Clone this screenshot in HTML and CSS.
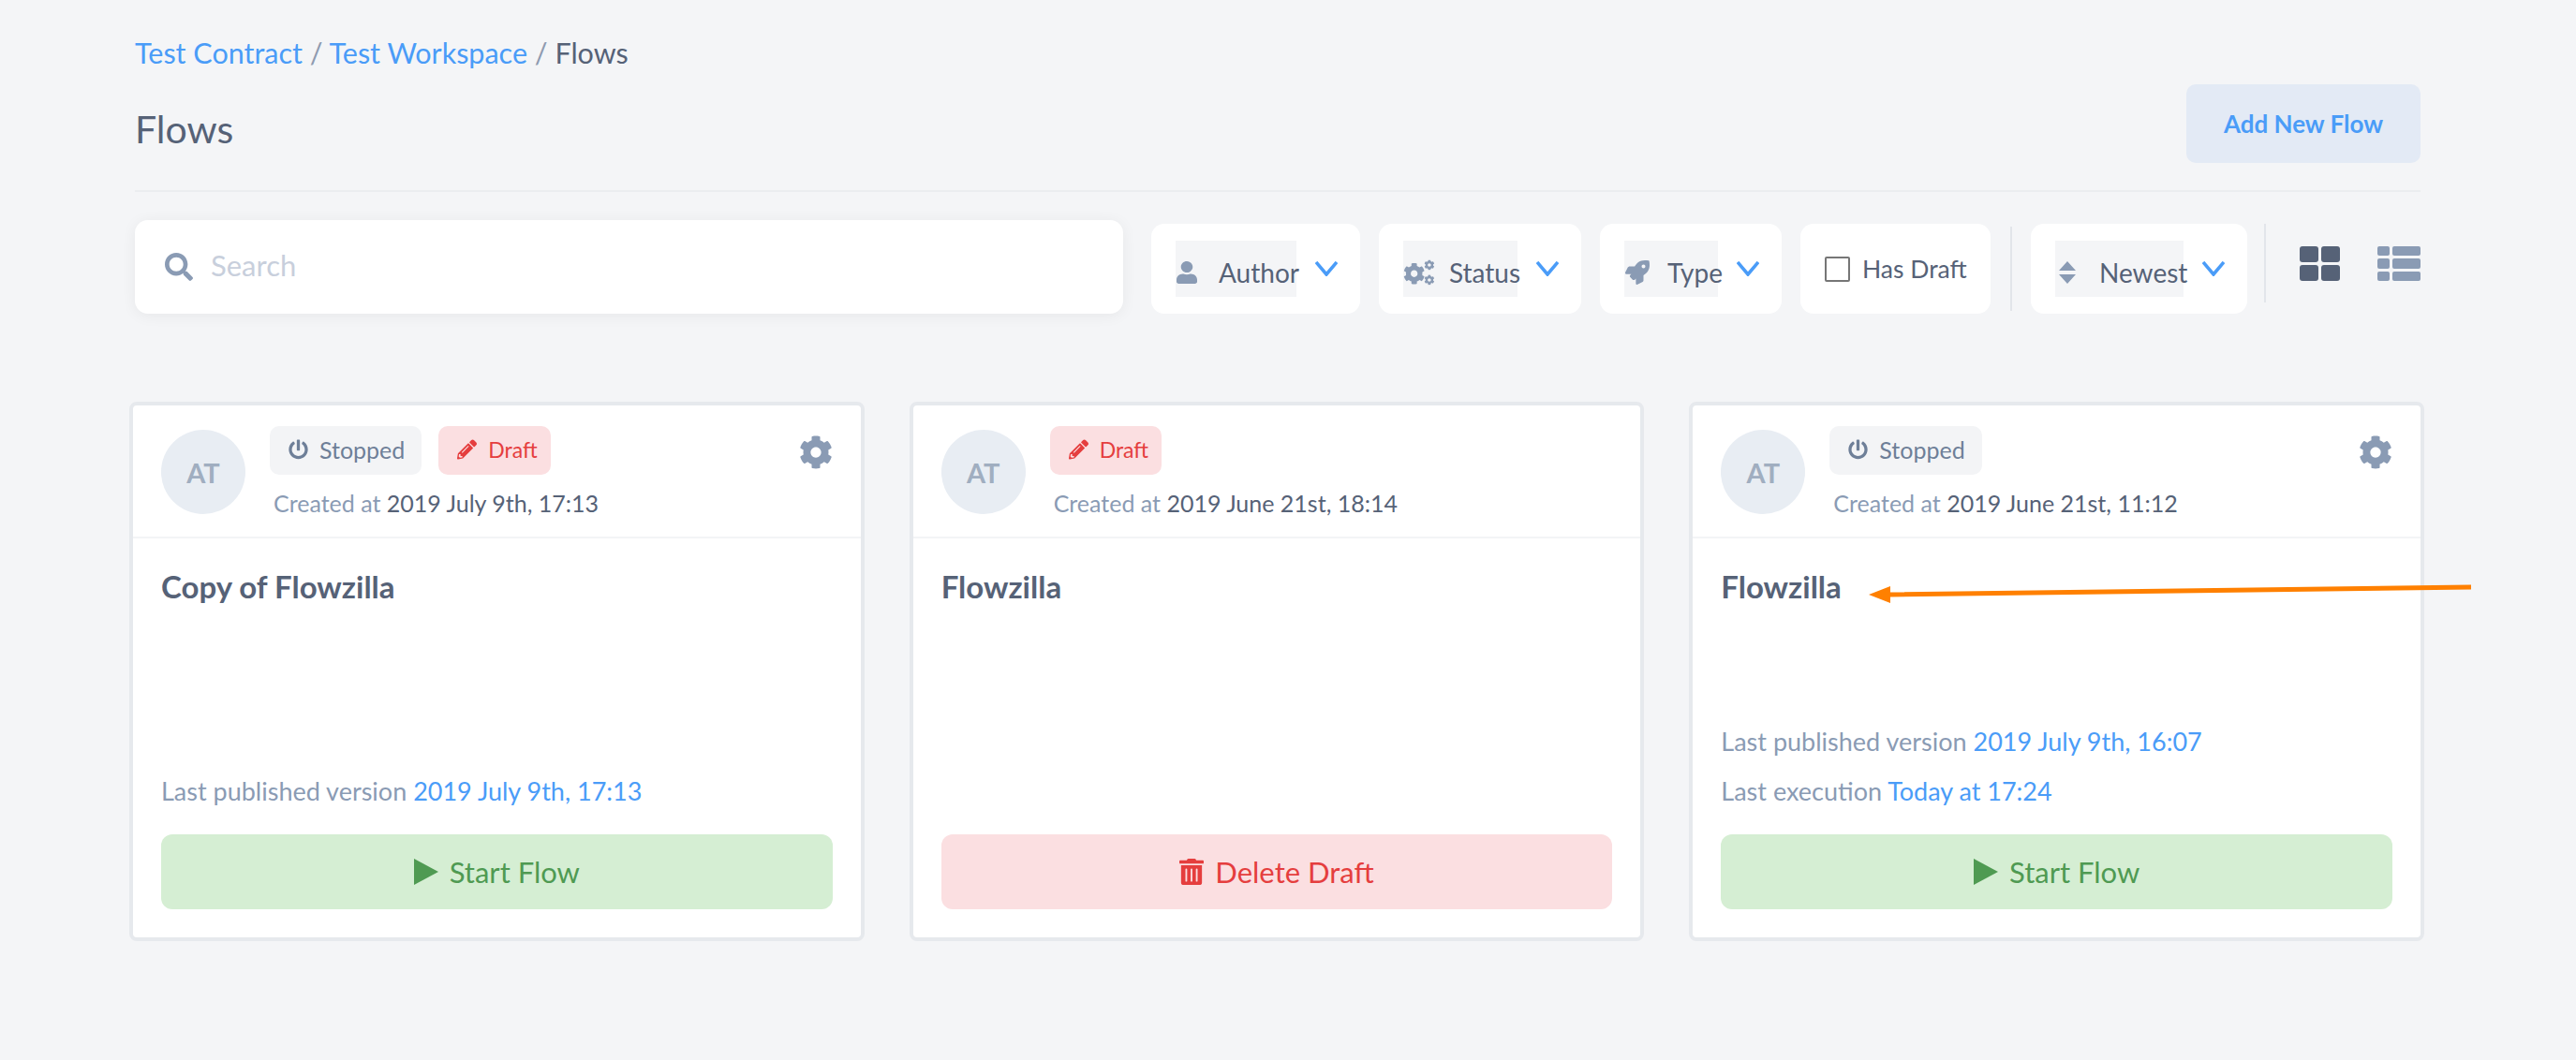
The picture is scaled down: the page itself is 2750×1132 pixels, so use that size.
FILE: index.html
```html
<!DOCTYPE html>
<html lang="en">
<head>
    <meta charset="UTF-8">
    <title>Flows</title>
    <link rel="stylesheet" href="styles.css">
</head>
<body>
<svg class="icon-defs" width="0" height="0">
    <symbol id="i-cog" viewBox="0 0 512 512"><path d="M487.4 315.7l-42.6-24.6c4.3-23.2 4.3-47 0-70.2l42.6-24.6c4.9-2.8 7.1-8.6 5.5-14-11.1-35.6-30-67.8-54.7-94.6-3.8-4.1-10-5.1-14.8-2.3L380.8 110c-17.9-15.4-38.5-27.3-60.8-35.1V25.8c0-5.6-3.9-10.5-9.4-11.7-36.7-8.2-74.3-7.8-109.2 0-5.5 1.2-9.4 6.1-9.4 11.7V75c-22.2 7.9-42.8 19.8-60.8 35.1L88.7 85.5c-4.9-2.8-11-1.9-14.8 2.3-24.7 26.7-43.6 58.9-54.7 94.6-1.7 5.4.6 11.2 5.5 14L67.3 221c-4.3 23.2-4.3 47 0 70.2l-42.6 24.6c-4.9 2.8-7.1 8.6-5.5 14 11.1 35.6 30 67.8 54.7 94.6 3.8 4.1 10 5.1 14.8 2.3l42.6-24.6c17.9 15.4 38.5 27.3 60.8 35.1v49.2c0 5.6 3.9 10.5 9.4 11.7 36.7 8.2 74.3 7.8 109.2 0 5.5-1.2 9.4-6.1 9.4-11.7v-49.2c22.2-7.9 42.8-19.8 60.8-35.1l42.6 24.6c4.9 2.8 11 1.9 14.8-2.3 24.7-26.7 43.6-58.9 54.7-94.6 1.5-5.5-.7-11.3-5.6-14.1zM256 336c-44.1 0-80-35.9-80-80s35.9-80 80-80 80 35.9 80 80-35.9 80-80 80z"/></symbol>
    <symbol id="i-power" viewBox="0 0 512 512"><path d="M400 54.1c63 45 104 118.6 104 201.9 0 136.8-110.8 247.7-247.5 248C120 504.3 8.2 393 8 256.4 7.9 173.1 48.9 99.3 111.8 54.2c11.7-8.3 28-4.8 35 7.7L162.6 90c5.9 10.5 3.1 23.8-6.6 31-41.5 30.8-68 79.6-68 134.9-.1 92.3 74.5 168.1 168 168.1 91.6 0 168.6-74.2 168-169.1-.3-51.8-24.7-101.8-68.1-134-9.7-7.2-12.4-20.5-6.4-30.9l15.8-28.1c7-12.4 23.2-16.1 34.8-7.8zM296 264V24c0-13.3-10.7-24-24-24h-32c-13.3 0-24 10.7-24 24v240c0 13.3 10.7 24 24 24h32c13.3 0 24-10.7 24-24z"/></symbol>
    <symbol id="i-pencil" viewBox="0 0 512 512"><path d="M497.9 142.1l-46.1 46.1c-4.7 4.7-12.3 4.7-17 0l-111-111c-4.7-4.7-4.7-12.3 0-17l46.1-46.1c18.7-18.7 49.1-18.7 67.9 0l60.1 60.1c18.8 18.7 18.8 49.1 0 67.9zM284.2 99.8L21.6 362.4.4 483.9c-2.9 16.4 11.4 30.6 27.8 27.8l121.5-21.3 262.6-262.6c4.7-4.7 4.7-12.3 0-17l-111-111c-4.8-4.7-12.4-4.7-17.1 0zM124.1 339.9c-5.5-5.5-5.5-14.3 0-19.8l154-154c5.5-5.5 14.3-5.5 19.8 0s5.5 14.3 0 19.8l-154 154c-5.5 5.5-14.3 5.5-19.8 0zM88 424h48v36.3l-64.5 11.3-31.1-31.1L51.7 376H88v48z"/></symbol>
    <symbol id="i-chevron" viewBox="0 0 24 16"><path d="M1 1l11 13L23 1" fill="none" stroke="currentColor" stroke-width="3.6"/></symbol>
</svg>

<div class="page">
    <div class="breadcrumb">
        <a href="#">Test Contract</a> <span class="slash">/</span> <a href="#">Test Workspace</a> <span class="slash">/</span> <span>Flows</span>
    </div>

    <div class="title-row">
        <h1>Flows</h1>
        <button class="add-btn">Add New Flow</button>
    </div>

    <div class="toolbar">
        <div class="search">
            <svg class="search-icon" viewBox="0 0 512 512"><path d="M505 442.7L405.3 343c-4.5-4.5-10.6-7-17-7H372c27.6-35.3 44-79.7 44-128C416 93.1 322.9 0 208 0S0 93.1 0 208s93.1 208 208 208c48.3 0 92.7-16.4 128-44v16.3c0 6.4 2.5 12.5 7 17l99.7 99.7c9.4 9.4 24.6 9.4 33.9 0l28.3-28.3c9.4-9.4 9.4-24.6.1-34zM208 336c-70.7 0-128-57.2-128-128 0-70.7 57.2-128 128-128 70.7 0 128 57.2 128 128 0 70.7-57.2 128-128 128z"/></svg>
            <input type="text" placeholder="Search">
        </div>

        <div class="filter">
            <div class="select select-author">
                <svg class="select-icon" viewBox="0 0 448 512" preserveAspectRatio="none"><path d="M224 256c70.7 0 128-57.3 128-128S294.7 0 224 0 96 57.3 96 128s57.3 128 128 128zm89.6 32h-16.7c-22.2 10.2-46.9 16-72.9 16s-50.6-5.8-72.9-16h-16.7C60.2 288 0 348.2 0 422.4V464c0 26.5 21.5 48 48 48h352c26.5 0 48-21.5 48-48v-41.6c0-74.2-60.2-134.4-134.4-134.4z"/></svg>
                <span>Author</span>
            </div>
            <svg class="chevron"><use href="#i-chevron"/></svg>
        </div>
        <div class="filter">
            <div class="select select-status">
                <svg class="select-icon" viewBox="0 0 640 512">
                    <use href="#i-cog" x="0" y="60" width="440" height="440"/>
                    <use href="#i-cog" x="420" y="0" width="210" height="210"/>
                    <use href="#i-cog" x="420" y="300" width="210" height="210"/>
                </svg>
                <span>Status</span>
            </div>
            <svg class="chevron"><use href="#i-chevron"/></svg>
        </div>
        <div class="filter">
            <div class="select select-type">
                <svg class="select-icon" viewBox="0 0 512 512"><path d="M505.12 19.09c-1.19-5.53-6.66-11-12.2-12.19C460.7 0 435.5 0 410.4 0 307.2 0 245.3 55.2 199.05 128H94.84c-16.35.02-35.56 11.88-42.89 26.48L2.52 253.3A28.4 28.4 0 0 0 0 264a24 24 0 0 0 24 24h103.82l-22.48 22.47c-11.36 11.36-13 32.26 0 45.25l50.9 50.9c11.16 11.19 32.16 13.16 45.28 0l22.48-22.47V488a24 24 0 0 0 24 24 28.56 28.56 0 0 0 10.7-2.52l98.73-49.39c14.63-7.3 26.51-26.5 26.51-42.86V312.8c72.6-46.31 128.03-108.41 128.03-211.1.01-25.2.01-50.4-6.95-82.61zM384.04 168a40 40 0 1 1 40.01-40 40 40 0 0 1-40.01 40z"/></svg>
                <span>Type</span>
            </div>
            <svg class="chevron"><use href="#i-chevron"/></svg>
        </div>
        <label class="filter draft-filter">
            <input type="checkbox">
            <span>Has Draft</span>
        </label>
        <div class="divider"></div>
        <div class="filter">
            <div class="select select-sort">
                <svg class="sort-icon" viewBox="0 0 20 24"><path d="M10 0l9 10H1zM10 24l-9-10h18z"/></svg>
                <span>Newest</span>
            </div>
            <svg class="chevron"><use href="#i-chevron"/></svg>
        </div>
        <div class="divider divider-top"></div>
        <div class="view-grid"><i></i><i></i><i></i><i></i></div>
        <div class="view-list"><i></i><i></i><i></i><i></i><i></i><i></i></div>
    </div>

    <div class="cards">
        <div class="card">
            <div class="card-head">
                <div class="avatar">AT</div>
                <div class="head-info">
                    <div class="badges">
                        <span class="badge badge-stopped"><svg><use href="#i-power"/></svg>Stopped</span>
                        <span class="badge badge-draft"><svg><use href="#i-pencil"/></svg>Draft</span>
                    </div>
                    <p class="created">Created at <b>2019 July 9th, 17:13</b></p>
                </div>
                <svg class="gear"><use href="#i-cog"/></svg>
            </div>
            <div class="card-body">
                <h3>Copy of Flowzilla</h3>
                <div class="meta">
                    <p>Last published version <a href="#">2019 July 9th, 17:13</a></p>
                </div>
                <button class="action action-start"><svg viewBox="0 0 26 28"><path d="M0 0l26 14L0 28z"/></svg>Start Flow</button>
            </div>
        </div>

        <div class="card">
            <div class="card-head">
                <div class="avatar">AT</div>
                <div class="head-info">
                    <div class="badges">
                        <span class="badge badge-draft"><svg><use href="#i-pencil"/></svg>Draft</span>
                    </div>
                    <p class="created">Created at <b>2019 June 21st, 18:14</b></p>
                </div>
            </div>
            <div class="card-body">
                <h3>Flowzilla</h3>
                <div class="meta"></div>
                <button class="action action-delete"><svg viewBox="0 0 448 512" preserveAspectRatio="none"><path d="M32 464a48 48 0 0 0 48 48h288a48 48 0 0 0 48-48V128H32zm272-256a16 16 0 0 1 32 0v224a16 16 0 0 1-32 0zm-96 0a16 16 0 0 1 32 0v224a16 16 0 0 1-32 0zm-96 0a16 16 0 0 1 32 0v224a16 16 0 0 1-32 0zM432 32H312l-9.4-18.7A24 24 0 0 0 281.1 0H166.8a23.72 23.72 0 0 0-21.4 13.3L136 32H16A16 16 0 0 0 0 48v32a16 16 0 0 0 16 16h416a16 16 0 0 0 16-16V48a16 16 0 0 0-16-16z"/></svg>Delete Draft</button>
            </div>
        </div>

        <div class="card">
            <div class="card-head">
                <div class="avatar">AT</div>
                <div class="head-info">
                    <div class="badges">
                        <span class="badge badge-stopped"><svg><use href="#i-power"/></svg>Stopped</span>
                    </div>
                    <p class="created">Created at <b>2019 June 21st, 11:12</b></p>
                </div>
                <svg class="gear"><use href="#i-cog"/></svg>
            </div>
            <div class="card-body">
                <h3>Flowzilla</h3>
                <div class="meta">
                    <p>Last published version <a href="#">2019 July 9th, 16:07</a></p>
                    <p>Last execution <a href="#">Today at 17:24</a></p>
                </div>
                <button class="action action-start"><svg viewBox="0 0 26 28"><path d="M0 0l26 14L0 28z"/></svg>Start Flow</button>
            </div>
        </div>
    </div>
</div>

<!-- annotation arrow drawn over the screenshot -->
<svg class="arrow" viewBox="0 0 2750 1132"><path d="M2638 624.5L2018 632.5V626L1995 635L2018 644V637.5L2638 629.5z"/></svg>
</body>
</html>
```

FILE: styles.css
```css
* {
    box-sizing: border-box;
}
body {
    margin: 0;
    min-height: 1132px;
    background-color: #f4f5f7;
    color: #566277;
    font-family: Lato, "Open Sans", sans-serif;
    font-size: 25px;
    overflow: hidden;
    position: relative;
}
a {
    color: #4a9cf8;
    text-decoration: none;
}
p {
    margin: 0;
}
.icon-defs {
    position: absolute;
}
.page {
    padding: 41px 166px 0 144px;
}
.breadcrumb {
    font-size: 30.5px;
    line-height: 30px;
}
.slash {
    color: #8f9bb0;
}
.title-row {
    display: flex;
    justify-content: space-between;
    align-items: flex-start;
    margin-top: 19px;
    height: 115px;
    border-bottom: 2px solid #ebedf0;
}
h1 {
    margin: 24px 0 0;
    font-size: 41px;
    line-height: 48px;
    font-weight: 400;
}
.add-btn {
    width: 250px;
    height: 84px;
    border: none;
    border-radius: 10px;
    background: #e3eaf5;
    color: #4a9cf8;
    font-family: inherit;
    font-size: 26px;
    font-weight: 700;
}
.toolbar {
    display: flex;
    align-items: flex-end;
    margin-top: 30px;
}
.search {
    display: flex;
    flex: none;
    align-items: center;
    width: 1055px;
    height: 100px;
    padding-left: 32px;
    margin-right: 30px;
    border-radius: 14px;
    background: white;
    box-shadow: 0 2px 16px rgba(0, 0, 0, 0.06);
}
.search-icon {
    width: 30px;
    height: 30px;
    fill: #8a9bb4;
}
.search input {
    flex: 1;
    border: none;
    outline: none;
    margin: 0 0 5px 19px;
    padding: 0;
    font-family: inherit;
    font-size: 31px;
    color: #566277;
}
.search input::placeholder {
    color: #c8cfdc;
    opacity: 1;
}
.filter {
    display: flex;
    flex: none;
    align-items: center;
    height: 96px;
    padding: 0 24px 0 26px;
    margin-right: 20px;
    border-radius: 14px;
    background: white;
    font-size: 28px;
}
.select {
    display: flex;
    align-items: center;
    height: 60px;
    padding-top: 8px;
    background: #f4f5f7;
    white-space: nowrap;
}
.select-author { width: 129px; }
.select-status { width: 122px; }
.select-type { width: 100px; }
.select-sort { width: 137px; }
.select-icon {
    flex: none;
    width: 28px;
    height: 26px;
    margin-right: 18px;
    fill: #8a9bb4;
}
.select-author .select-icon {
    width: 22px;
    height: 24px;
    margin-left: 1px;
    margin-right: 23px;
}
.select-status .select-icon {
    width: 34px;
    height: 28px;
    margin-right: 15px;
}
.sort-icon {
    flex: none;
    width: 20px;
    height: 24px;
    margin: 0 24px 0 3px;
    fill: #8a9bb4;
}
.chevron {
    flex: none;
    width: 24px;
    height: 16px;
    margin-left: 20px;
    color: #4a9cf8;
}
.draft-filter {
    width: 203px;
    padding-right: 0;
    margin-right: 21px;
    font-size: 26.5px;
}
.draft-filter input {
    appearance: none;
    flex: none;
    width: 27px;
    height: 27px;
    margin: 0 13px 0 0;
    background: white;
    border: 2px solid #767676;
    border-radius: 2px;
}
.divider {
    flex: none;
    width: 2px;
    height: 90px;
    margin: 0 20px 3px 0;
    background: #e2e5ea;
}
.divider-top {
    height: 84px;
    margin: 0 36px 12px -2px;
}
.view-grid, .view-list {
    display: grid;
    flex: none;
    gap: 3px;
    height: 37px;
    margin-bottom: 35px;
}
.view-grid {
    grid-template-columns: 20px 20px;
    margin-right: 40px;
}
.view-list {
    grid-template-columns: 13px 30px;
}
.view-grid i {
    background: #566277;
    border-radius: 3px;
}
.view-list i {
    background: #8a9bb4;
    border-radius: 2px;
}
.cards {
    display: grid;
    grid-template-columns: repeat(3, 1fr);
    gap: 48px;
    margin: 94px -4px 0 -6px;
}
.card {
    display: flex;
    flex-direction: column;
    height: 576px;
    border: 4px solid #e6e9ed;
    border-radius: 8px;
    background: white;
}
.card-head {
    display: flex;
    flex: none;
    align-items: flex-start;
    height: 142px;
    padding: 22px 30px 0;
    border-bottom: 2px solid #f3f4f6;
}
.avatar {
    display: flex;
    flex: none;
    align-items: center;
    justify-content: center;
    width: 90px;
    height: 90px;
    margin-top: 4px;
    border-radius: 50%;
    background: #e8edf3;
    color: #a0aec0;
    font-size: 29px;
    font-weight: 700;
}
.head-info {
    margin-left: 26px;
}
.badges {
    display: flex;
    gap: 18px;
}
.badge {
    display: flex;
    align-items: center;
    height: 52px;
    padding: 0 18px 2px 20px;
    border-radius: 10px;
    font-size: 25px;
    white-space: nowrap;
}
.badge svg {
    flex: none;
    width: 21px;
    height: 22px;
    margin-right: 12px;
    fill: currentColor;
}
.badge-stopped {
    background: #f3f4f6;
    color: #6e7f98;
}
.badge-draft {
    padding-right: 14px;
    background: #fbdfe1;
    color: #e53e3e;
    font-size: 23px;
}
.created {
    margin: 15px 0 0 4px;
    color: #8a9bb4;
    line-height: 30px;
}
.created b {
    color: #566277;
    font-weight: 400;
}
.gear {
    flex: none;
    width: 36px;
    height: 36px;
    margin: 10px 0 0 auto;
    fill: #8a9bb4;
}
.card-body {
    display: flex;
    flex: 1;
    flex-direction: column;
    padding: 0 30px 30px;
}
h3 {
    margin: 33px 0 0;
    font-size: 33px;
    line-height: 36px;
    font-weight: 700;
}
.meta {
    display: flex;
    flex-direction: column;
    gap: 23px;
    margin-top: auto;
    margin-bottom: 31px;
    color: #8a9bb4;
    font-size: 27px;
}
.meta p {
    line-height: 30px;
}
.action {
    display: flex;
    flex: none;
    align-items: center;
    justify-content: center;
    width: 100%;
    height: 80px;
    border: none;
    border-radius: 12px;
    font-family: inherit;
    font-size: 31px;
}
.action svg {
    width: 26px;
    height: 28px;
    margin-right: 12px;
    fill: currentColor;
}
.action-start {
    background: #d5eed3;
    color: #4f9a52;
}
.action-delete {
    background: #fbdfe1;
    color: #e53e3e;
}
.arrow {
    position: absolute;
    top: 0;
    left: 0;
    width: 2750px;
    height: 1132px;
    fill: #ff8000;
    pointer-events: none;
}
```
